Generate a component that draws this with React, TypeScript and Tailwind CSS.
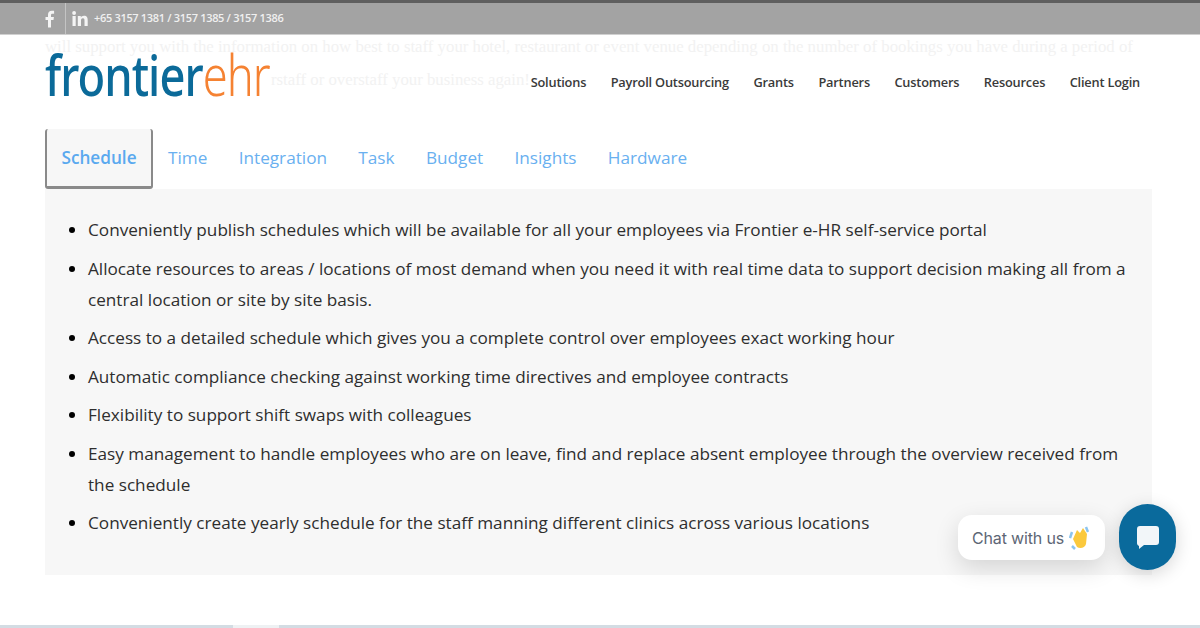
import React from "react";

const nav = ["Solutions", "Payroll Outsourcing", "Grants", "Partners", "Customers", "Resources", "Client Login"];
const tabs = ["Time", "Integration", "Task", "Budget", "Insights", "Hardware"];
const items = [
  "Conveniently publish schedules which will be available for all your employees via Frontier e-HR self-service portal",
  "Allocate resources to areas / locations of most demand when you need it with real time data to support decision making all from a central location or site by site basis.",
  "Access to a detailed schedule which gives you a complete control over employees exact working hour",
  "Automatic compliance checking against working time directives and employee contracts",
  "Flexibility to support shift swaps with colleagues",
  "Easy management to handle employees who are on leave, find and replace absent employee through the overview received from the schedule",
  "Conveniently create yearly schedule for the staff manning different clinics across various locations",
];

export default function App() {
  return (
    <div className="relative h-[628px] w-[1200px] overflow-hidden bg-white font-['Open_Sans','Liberation_Sans',sans-serif]">
      {/* top bar */}
      <div className="relative z-10 flex h-[35px] items-center border-t-[3px] border-b border-t-[#5f5f5f] border-b-[#d0d0d0] bg-[#a3a3a3] pl-[40px] text-white">
        <div className="flex h-full w-[20px] items-center justify-center">
          <svg width="11" height="18" viewBox="0 0 11 17" fill="#f4f4f4">
            <path d="M3 17V9.4H.5V6.4H3V4.2C3 1.6 4.5.3 6.8.3c1.1 0 2 .1 2.3.1v2.8H7.5c-1.2 0-1.5.6-1.5 1.4v1.8h2.9l-.4 3H6V17z" />
          </svg>
        </div>
        <div className="ml-[5px] h-full w-px bg-[#c4c4c4]" />
        <svg className="ml-[6px]" width="16" height="15" viewBox="0 0 16 15" fill="#f4f4f4">
          <rect x="0.5" y="5" width="3.2" height="10" />
          <circle cx="2.1" cy="2" r="1.9" />
          <path d="M5.8 5h3v1.4C9.3 5.500 10.500 4.700 12 4.700c3 0 3.700 2 3.700 4.600V15h-3.200V9.900c0-1.200 0-2.600-1.600-2.600s-1.900 1.200-1.900 2.500V15H5.800z" />
        </svg>
        <span className="ml-[6px] text-[11px] font-semibold tracking-[-0.32px] text-[#f0f0f0]">+65 3157 1381 / 3157 1385 / 3157 1386</span>
      </div>

      {/* faint text scrolled behind the header */}
      <div className="absolute left-[45px] top-[30px] w-[1120px] font-['Liberation_Serif',serif] text-[16.800px] leading-[33px] text-[#f2f2f2]">
        will support you with the information on how best to staff your hotel, restaurant or event venue depending on the number of bookings you have during a period of
        <br />
        <span className="pl-[226px]">rstaff or overstaff your business again!</span>
      </div>

      {/* header */}
      <div className="relative flex h-[94px] items-start pl-[45px] pr-[60px]">
        <div className="mt-[6px] origin-left scale-x-[0.795] whitespace-nowrap font-['Noto_Sans',sans-serif] text-[57px] leading-[66px] tracking-[-1.2px]">
          <span className="font-medium text-[#0b6a99]">frontier</span>
          <span className="font-light text-[#f58232]">ehr</span>
        </div>
        <nav className="ml-auto mt-[38px] flex gap-[24.500px] text-[12.800px] font-semibold tracking-[-0.2px] text-[#3a3a3a]">
          {nav.map((n) => (
            <span key={n}>{n}</span>
          ))}
        </nav>
      </div>

      {/* tabs */}
      <div className="flex h-[60px] items-stretch pl-[45px] text-[17.200px] text-[#69b0f0]">
        <div className="flex w-[108px] items-center justify-center rounded-[3px] border-x-2 border-b-[3px] border-x-[#8a8a8a] border-b-[#8a8a8a] bg-[#f7f7f7] font-semibold text-[#5aa9ef]">
          Schedule
        </div>
        <div className="ml-[15px] flex items-center gap-[31.300px] pb-[3px]">
          {tabs.map((t) => (
            <span key={t}>{t}</span>
          ))}
        </div>
      </div>

      {/* panel */}
      <div className="ml-[45px] h-[386px] w-[1107px] bg-[#f7f7f7] pl-[43px] pr-[20px] pt-[25px]">
        <ul className="list-disc text-[17.160px] leading-[31px] text-[#2e2e2e] marker:text-black">
          {items.map((i) => (
            <li key={i} className="mb-[7.500px]">
              {i}
            </li>
          ))}
        </ul>
      </div>

      {/* bottom edge */}
      <div className="absolute bottom-0 left-0 flex h-[3px] w-full bg-[#d3dce3]">
        <div className="ml-[233px] w-[46px] bg-[#eef1f3]" />
      </div>

      {/* chat */}
      <div className="absolute left-[958px] top-[515px] flex h-[45px] w-[147px] items-center gap-[5px] rounded-[14px] bg-white pl-[14px] text-[#5d6675] shadow-[0_8px_24px_rgba(0,0,0,0.14)]">
        <span className="font-['Inter',sans-serif] text-[16px] tracking-[-0.15px]">Chat with us</span>
        <svg width="20" height="24" viewBox="0 0 20 24">
          <path d="M3 6 1 12M17 1l2 5M3 20l3 3" stroke="#8cc4ee" strokeWidth="2.500" fill="none" />
          <path d="M4 13 8 4l3 3 3-5 4 6-1 10c-1 4-6 5-9 3z" fill="#fbc93d" />
        </svg>
      </div>
      <div className="absolute left-[1119px] top-[504px] flex h-[66px] w-[57px] items-center justify-center rounded-full bg-[#0a6a9c] shadow-[0_4px_18px_rgba(0,0,0,0.16)]">
        <svg width="22" height="23" viewBox="0 0 22 23" fill="#f2f6f9">
          <path d="M3 0h16a3 3 0 0 1 3 3v13a3 3 0 0 1-3 3H7l-5 4V20a3 3 0 0 1-2-3V3a3 3 0 0 1 3-3z" />
        </svg>
      </div>
    </div>
  );
}
